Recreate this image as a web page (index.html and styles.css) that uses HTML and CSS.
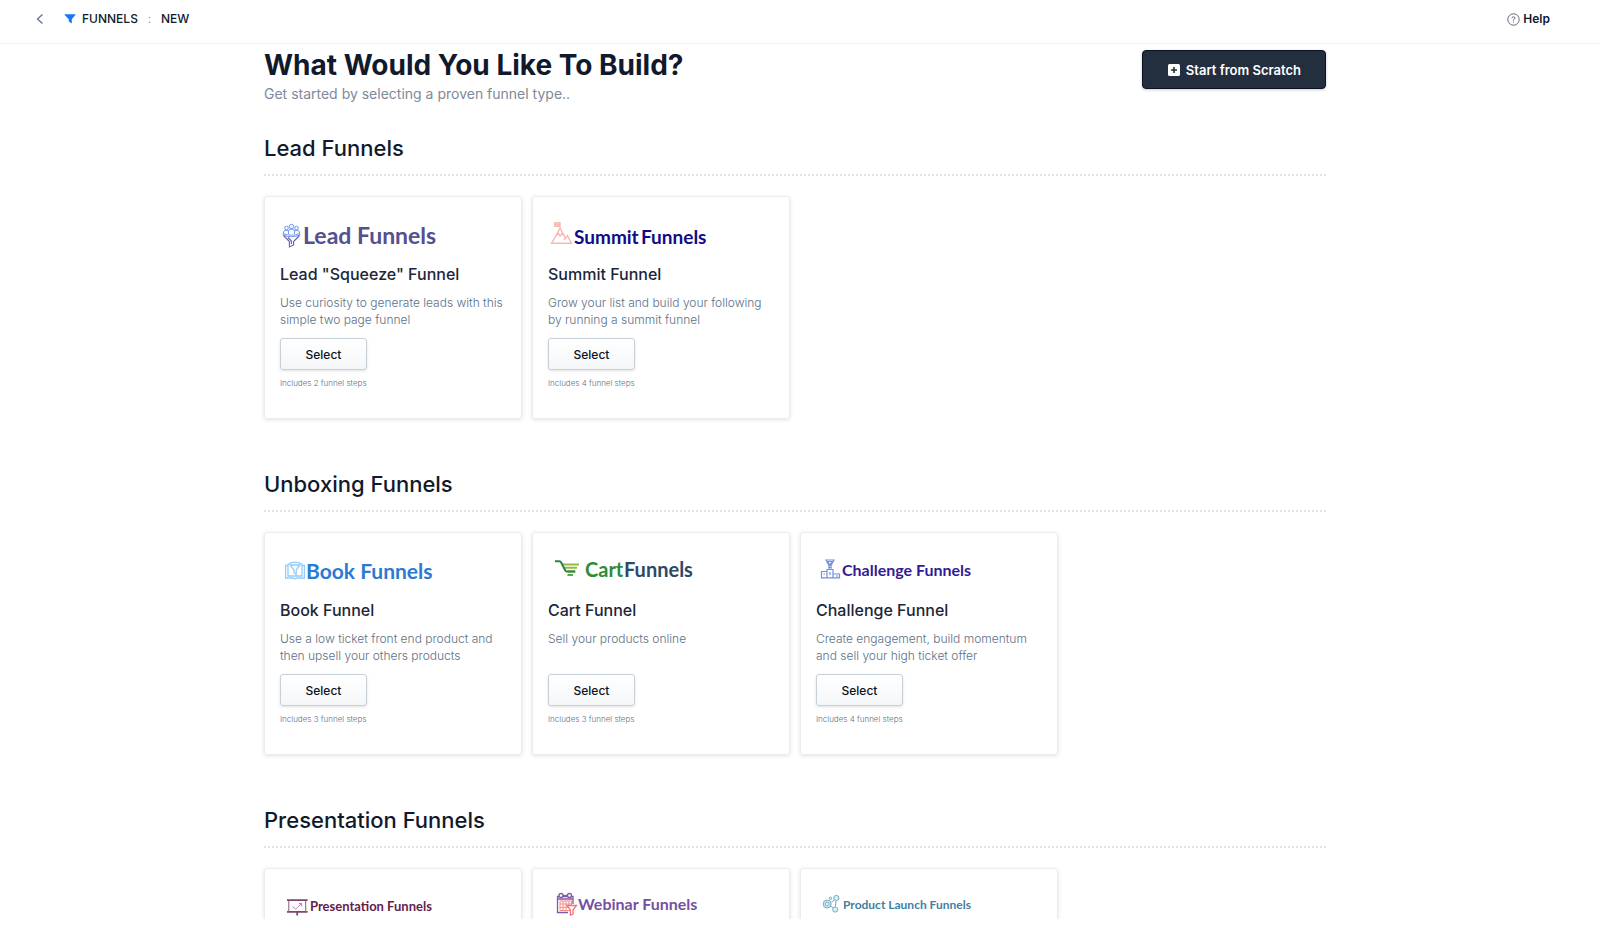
FILE: index.html
```html
<!DOCTYPE html>
<html lang="en">

<head>
	<meta charset="utf-8">
	<title>Funnels : New</title>
	<link rel="stylesheet" href="styles.css">
</head>

<body>
	<header class="topbar">
		<nav class="crumbs">
			<a class="back" href="#" aria-label="Back">
				<svg width="8" height="12" viewBox="0 0 8 12" fill="none" stroke="#64748b" stroke-width="1.3"><path d="M6.5 1.5 L1.5 6 L6.5 10.5" /></svg>
			</a>
			<a class="crumb" href="#">
				<svg width="12" height="12" viewBox="0 0 12 12" fill="#1a73f8"><path d="M.8 1.2 H11.2 Q11.7 1.3 11.3 2 L7.8 6.2 V10.4 L4.8 8.6 V6.2 L.7 2 Q.3 1.3 .8 1.2Z" /></svg>
				FUNNELS
			</a>
			<span class="divider">:</span>
			<span class="crumb">NEW</span>
		</nav>
		<a class="help" href="#">
			<svg width="13" height="13" viewBox="0 0 13 13" fill="none" stroke="#64697a" stroke-width="1"><circle cx="6.5" cy="6.5" r="5.7" /><path d="M4.9 5.2 Q5 3.8 6.5 3.8 Q8 3.8 8 5.1 Q8 6 6.5 6.7 V7.5 M6.5 8.6 V9.6" /></svg>
			Help
		</a>
	</header>

	<main class="page">
		<div class="container">
			<div class="hero">
				<div>
					<h1>What Would You Like To Build?</h1>
					<p class="subtitle">Get started by selecting a proven funnel type..</p>
				</div>
				<button class="scratch" type="button">
					<svg width="12" height="12" viewBox="0 0 12 12"><rect width="12" height="12" rx="1.5" fill="#fff" /><path d="M6 3 V9 M3 6 H9" stroke="#232f3f" stroke-width="1.6" /></svg>
					Start from Scratch
				</button>
			</div>

			<section class="group">
				<h2>Lead Funnels</h2>
				<div class="cards">
					<article class="card">
						<svg class="logo" width="164" height="48" viewBox="0 0 164 48">
							<g fill="none" stroke="#6d97f0" stroke-width="1">
								<circle cx="11.5" cy="13.5" r="2.2" /><circle cx="6.5" cy="15" r="1.8" /><circle cx="16.5" cy="15" r="1.8" />
								<path d="M8.5 21 V18 Q8.8 16.2 11.5 16.2 Q14.2 16.2 14.5 18 V21 M3.5 20.5 V19 Q3.8 17.3 6.5 17.3 L8.5 18 M19.5 20.5 V19 Q19.2 17.3 16.5 17.3 L14.5 18" />
								<path d="M3.2 20.5 Q11.5 24 19.8 20.5 V22 Q11.5 25.5 3.2 22Z" />
							</g>
							<path d="M3.5 22.5 L9.4 28.5 V34 L13.6 32 V28.5 L19.5 22.5 M8 24.5 L11.4 28 V31" fill="none" stroke="#6662a5" stroke-width="1.1" />
							<text x="23" y="31" font-size="23" fill="#55508f">Lead Funnels</text>
						</svg>
						<h3>Lead "Squeeze" Funnel</h3>
						<p class="desc">Use curiosity to generate leads with this simple two page funnel</p>
						<button class="select" type="button">Select</button>
						<p class="steps">Includes 2 funnel steps</p>
					</article>
					<article class="card">
						<svg class="logo" width="164" height="48" viewBox="0 0 164 48">
							<g fill="none" stroke="#f7b9b2" stroke-width="1.4">
								<path d="M3.5 30.3 H23.5 L19.4 22.5 L17.5 25 L12 15.5 L3.5 30.3Z" />
								<path d="M8 22.5 L10.3 20.5 L12 23 L14 20.5 L16 22.5 M16 27 L17.5 25" />
								<path d="M12 16 V9.8 M6.8 9.7 H11.8 V13.2 H6.8Z M7 11.5 H11.5" />
							</g>
							<text x="26" y="31" font-size="19" fill="#100c86">Summit<tspan x="93">Funnels</tspan></text>
						</svg>
						<h3>Summit Funnel</h3>
						<p class="desc">Grow your list and build your following by running a summit funnel</p>
						<button class="select" type="button">Select</button>
						<p class="steps">Includes 4 funnel steps</p>
					</article>
				</div>
			</section>

			<section class="group">
				<h2>Unboxing Funnels</h2>
				<div class="cards">
					<article class="card">
						<svg class="logo" width="164" height="48" viewBox="0 0 164 48">
							<g fill="none" stroke="#93cdfa" stroke-width="1.3">
								<path d="M8 16.5 H5.6 V29 H13.5 Q15 30.5 16.5 29 H24.4 V16.5 H22" />
								<path d="M8 27 V15.5 Q11 13 15 13.5 Q19 13 22 15.5 V27 H8Z" />
								<path d="M10 16 H20 L16.2 21 V25.5 L14 24 V21Z" />
							</g>
							<text x="26" y="30" font-size="21" fill="#2a7bd3">Book Funnels</text>
						</svg>
						<h3>Book Funnel</h3>
						<p class="desc">Use a low ticket front end product and then upsell your others products</p>
						<button class="select" type="button">Select</button>
						<p class="steps">Includes 3 funnel steps</p>
					</article>
					<article class="card">
						<svg class="logo" width="164" height="48" viewBox="0 0 164 48">
							<g fill="none" stroke-width="2">
								<path d="M14.5 15.5 H31 M16.5 18.7 H29" stroke="#92bd42" />
								<path d="M19.5 22.4 H27.5 M19.5 26 H25" stroke="#61a842" />
								<path d="M7 12.2 H11.5 Q12.6 12.2 13.2 13.5 L17 21 Q17.7 22.4 19 22.4 H27" stroke="#2e8544" />
							</g>
							<text x="37" y="28" font-size="20" fill="#2e8b3c">Cart<tspan x="76" fill="#2e4a62">Funnels</tspan></text>
						</svg>
						<h3>Cart Funnel</h3>
						<p class="desc">Sell your products online</p>
						<button class="select" type="button">Select</button>
						<p class="steps">Includes 3 funnel steps</p>
					</article>
					<article class="card">
						<svg class="logo" width="164" height="48" viewBox="0 0 164 48">
							<g fill="none" stroke="#7690dc" stroke-width="1.2">
								<path d="M5.5 28.8 V22.5 H11 V28.8Z M11 28.8 V20.5 H17 V28.8Z M17 28.8 V25 H23.5 V28.8Z M14 23 V26 M20 27 H22 M7.5 25 H9" />
								<path d="M10 11 H18 L15 16.5 V18.5 H13 V16.5Z M11.8 12.5 H16.2 L14 16Z M12 19 H16" />
							</g>
							<text x="26" y="27" font-size="16" fill="#321b94">Challenge Funnels</text>
						</svg>
						<h3>Challenge Funnel</h3>
						<p class="desc">Create engagement, build momentum and sell your high ticket offer</p>
						<button class="select" type="button">Select</button>
						<p class="steps">Includes 4 funnel steps</p>
					</article>
				</div>
			</section>

			<section class="group">
				<h2>Presentation Funnels</h2>
				<div class="cards">
					<article class="card">
						<svg class="logo" width="164" height="48" viewBox="0 0 164 48">
							<path d="M7 15.2 H27.5 M7 26.8 H27.5 M17.2 27 V30.5" fill="none" stroke="#7c4770" stroke-width="1.8" />
							<path d="M8.8 16 V27 M25.7 16 V27" stroke="#8a5a80" />
							<path d="M12.5 21.5 L15.5 24 L17.5 22.5 L21.5 18.5 M19 18.5 H21.7 V21.5" fill="none" stroke="#c878a8" />
							<text x="30" y="26" font-size="13" fill="#64214f">Presentation Funnels</text>
						</svg>
					</article>
					<article class="card">
						<svg class="logo" width="164" height="48" viewBox="0 0 164 48">
							<g fill="none" stroke="#805aa5" stroke-width="1.3">
								<path d="M20 27.5 H9.5 V11.5 H25 V19 M9.5 14 H25" />
								<circle cx="13" cy="10.5" r="2" fill="#fff" /><circle cx="21.5" cy="10.5" r="2" fill="#fff" /><path d="M15 10.5 H19.5" />
							</g>
							<path d="M12 16 H23.5 V25.5 H12Z M12 19 H23.5 M12 22.3 H20 M15 16 V25.5 M18 16 V25.5 M21 16 V20" fill="none" stroke="#f68b8b" stroke-width="1" />
							<path d="M19 20.5 H28.5 L25 25 V29 L22.5 30 V25Z" fill="#fff" stroke="#f47272" stroke-width="1.3" />
							<text x="30" y="25" font-size="16" fill="#7550a0">Webinar Funnels</text>
						</svg>
					</article>
					<article class="card">
						<svg class="logo" width="164" height="48" viewBox="0 0 164 48">
							<g fill="#d9f0f5" stroke="#76adc4" stroke-width="1">
								<circle cx="11.2" cy="19" r="4" /><circle cx="11.2" cy="19" r="2" /><circle cx="20.3" cy="13" r="2.6" /><circle cx="14.5" cy="13.3" r="1.2" /><circle cx="19.2" cy="24.5" r="2.6" />
								<path d="M15.5 17 L18.5 15 M20 16 L19.4 21.5 M14.8 20.8 L17 22.8" fill="none" />
							</g>
							<text x="27" y="24" font-size="12" fill="#3f7fa3">Product Launch Funnels</text>
						</svg>
					</article>
				</div>
			</section>
		</div>
	</main>
</body>

</html>
```

FILE: styles.css
```css
* {
	box-sizing: border-box;
}

body {
	display: flex;
	flex-direction: column;
	height: 100vh;
	margin: 0;
	padding-bottom: 9px;
	overflow: hidden;
	font-family: Inter, "Liberation Sans", sans-serif;
	color: #101a2c;
	background-color: #fff;
}

h1, h2, h3, p {
	margin: 0;
}

a {
	color: inherit;
	text-decoration: none;
}

button {
	font-family: inherit;
	cursor: pointer;
}

.topbar {
	display: flex;
	flex-shrink: 0;
	align-items: center;
	justify-content: space-between;
	padding: 10px 50px 15px 36px;
	line-height: 18px;
	border-bottom: 1px solid #f0f1f2;
}

.crumbs {
	display: flex;
	align-items: center;
}

.back {
	display: flex;
	margin-right: 20px;
}

.crumb {
	display: flex;
	align-items: center;
	gap: 6px;
	font-size: 12px;
	font-weight: 500;
}

.divider {
	width: 23px;
	font-size: 12px;
	text-align: center;
	color: #8fa3b0;
}

.help {
	display: flex;
	align-items: center;
	gap: 3px;
	font-size: 12px;
	font-weight: 600;
}

.page {
	flex: 1;
	min-height: 0;
	padding-right: 10px;
	overflow: hidden;
}

.container {
	max-width: 1062px;
	margin: 0 auto;
	padding-top: 6px;
}

.hero {
	display: flex;
	align-items: flex-start;
	justify-content: space-between;
	margin-bottom: 30px;
}

h1 {
	font-size: 28px;
	font-weight: 700;
	line-height: 30px;
}

.subtitle {
	margin-top: 4px;
	font-size: 14px;
	line-height: 20px;
	color: #7e8999;
}

.scratch {
	display: flex;
	align-items: center;
	gap: 6px;
	height: 39px;
	padding: 0 24px 0 25px;
	font-size: 13px;
	font-weight: 600;
	color: #fff;
	background-color: #232f3f;
	border: 1px solid #0b1220;
	border-radius: 4px;
	box-shadow: 0 1px 3px rgba(0, 0, 0, 0.2);
}

.group {
	margin-bottom: 51px;
}

h2 {
	padding-bottom: 12px;
	margin-bottom: 20px;
	font-size: 22px;
	font-weight: 500;
	line-height: 28px;
	border-bottom: 2px dotted #e3e3e5;
}

.cards {
	display: grid;
	grid-template-columns: repeat(4, 1fr);
	gap: 10px;
}

.card {
	min-height: 223px;
	padding: 16px 15px 28px;
	border: 1px solid #ececee;
	border-radius: 3px;
	box-shadow: 0 1px 4px rgba(0, 0, 0, 0.12);
}

.logo {
	display: block;
	font-family: Lato, sans-serif;
	font-weight: 700;
}

h3 {
	font-size: 16px;
	font-weight: 500;
	line-height: 26px;
	color: #1c2638;
}

.desc {
	min-height: 34px;
	margin-top: 7px;
	font-size: 12px;
	font-weight: 300;
	line-height: 17px;
	color: #5c7085;
}

.select {
	display: block;
	width: 87px;
	height: 32px;
	margin-top: 10px;
	font-size: 12px;
	font-weight: 500;
	color: #0b1220;
	background: linear-gradient(#fff, #f4f6f8);
	border: 1px solid #c6d0d6;
	border-radius: 3px;
	box-shadow: 0 1px 3px rgba(0, 0, 0, 0.12);
}

.steps {
	margin-top: 7px;
	font-size: 8px;
	font-weight: 300;
	line-height: 12px;
	color: #5c7085;
}
```
